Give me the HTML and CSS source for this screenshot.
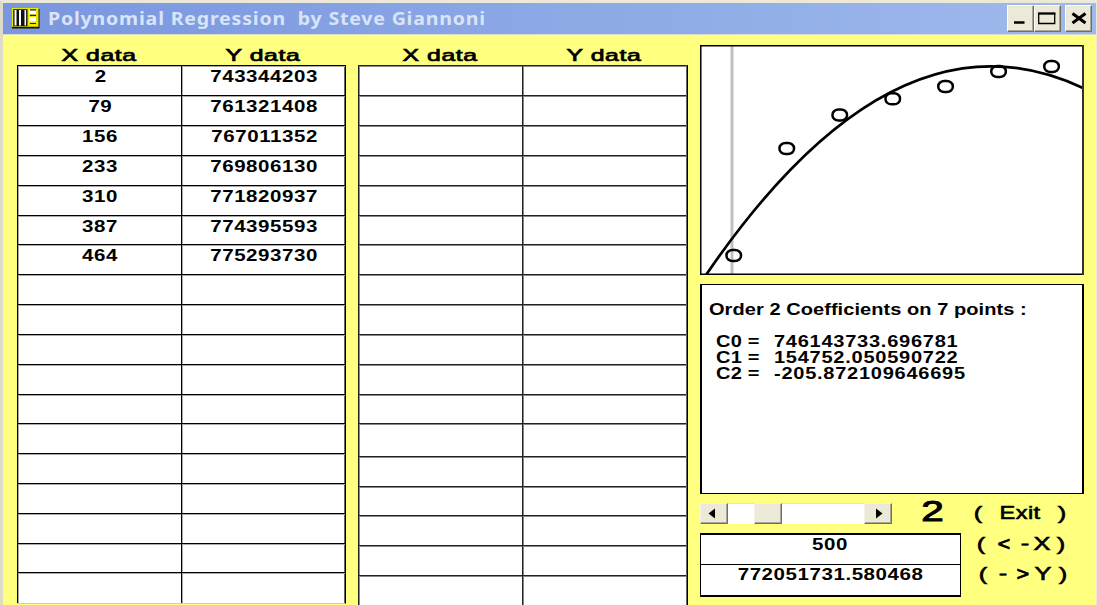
FILE: index.html
```html
<!DOCTYPE html>
<html lang="en">
<head>
<meta charset="utf-8">
<title>Polynomial Regression</title>
<link rel="stylesheet" href="styles.css">
</head>
<body>
<div class="window">
  <header class="titlebar">
    <svg class="app-icon" width="28" height="21" viewBox="0 0 28 21">
      <rect x="0" y="1" width="27.500" height="19.500" fill="#111"/>
      <rect x="0" y="0" width="26.500" height="18.800" fill="#e8e800"/>
      <rect x="1.200" y="1.200" width="14.300" height="17" fill="#111"/>
      <path d="M3.500 2V17.500M8 2V17.500" stroke="#fff" stroke-width="2"/>
      <path d="M13.300 2V17.500" stroke="#fff" stroke-width="1.600"/>
      <path d="M17 4.300h7M17 11.300h7" stroke="#fff" stroke-width="4"/>
      <path d="M18 1.800h6M18 7.300h6M18 15.500h6" stroke="#222" stroke-width="1.200"/>
    </svg>
    <h1 class="title"><span class="title-text">Polynomial Regression&nbsp; by Steve Giannoni</span></h1>
    <div class="controls">
      <button class="ctl" aria-label="Minimize"><svg width="26" height="26"><path d="M6 16.500h10.500" stroke="#000" stroke-width="2.500"/></svg></button>
      <button class="ctl" aria-label="Maximize"><svg width="26" height="26"><path d="M3.700 7v10.500h16V7" fill="none" stroke="#000" stroke-width="1.300"/><path d="M3 7.500h17.400" stroke="#000" stroke-width="2.300"/></svg></button>
      <button class="ctl close" aria-label="Close"><svg width="26" height="26"><path d="M6.500 7.500l13 9.500M19.500 7.500l-13 9.500" stroke="#000" stroke-width="3"/></svg></button>
    </div>
  </header>
  <main class="client">
    <section class="data first">
      <div class="heads"><span><b class="head">X data</b></span><span><b class="head">Y data</b></span></div>
      <div class="grid" id="grid-a"></div>
    </section>
    <section class="data second">
      <div class="heads"><span><b class="head">X data</b></span><span><b class="head">Y data</b></span></div>
      <div class="grid" id="grid-b"></div>
    </section>
    <section class="side">
      <svg class="plot" width="384" height="230" viewBox="0 0 384 230">
        <rect width="384" height="230" fill="#fff"/>
        <path d="M32 1V229" stroke="#c0c0c0" stroke-width="3"/>
        <path d="M6 230Q194.500 -46 383 43" fill="none" stroke="#000" stroke-width="2.700"/>
        <g fill="none" stroke="#000" stroke-width="2.500">
          <rect x="26.500" y="205" width="14.500" height="11" rx="6" ry="5"/>
          <rect x="79.500" y="98" width="14.500" height="11" rx="6" ry="5"/>
          <rect x="132.500" y="64.500" width="14.500" height="11" rx="6" ry="5"/>
          <rect x="185.500" y="48.300" width="14.500" height="11" rx="6" ry="5"/>
          <rect x="238.300" y="36" width="14.500" height="11" rx="6" ry="5"/>
          <rect x="291.300" y="21" width="14.500" height="11" rx="6" ry="5"/>
          <rect x="344.300" y="16" width="14.500" height="11" rx="6" ry="5"/>
        </g>
        <path d="M0 .75H383.500M0 229.300H383.500M.8 0V230" stroke="#000" stroke-width="1.500"/>
        <path d="M383 0V230" stroke="#333" stroke-width="2"/>
      </svg>
      <div class="report">
        <p class="line summary"><span class="order">Order 2 Coefficients on 7 points :</span></p>
        <p class="line coef"><span class="name">C0 =</span><span class="num">746143733.696781</span></p>
        <p class="line coef"><span class="name">C1 =</span><span class="num">154752.050590722</span></p>
        <p class="line coef"><span class="name">C2 =</span><span class="num">-205.872109646695</span></p>
      </div>
      <div class="order-row">
        <div class="scroll">
          <button class="sb" aria-label="Lower order"><svg width="28" height="21"><path d="M8.500 10.500L15 5.500V15.500Z"/></svg></button>
          <span class="track"></span>
          <span class="sb thumb"></span>
          <span class="track long"></span>
          <button class="sb" aria-label="Higher order"><svg width="28" height="21"><path d="M18.500 10.500L12 5.500V15.500Z"/></svg></button>
        </div>
        <span class="degree"><b>2</b></span>
        <div class="action exit"><i>(</i><i class="word">Exit</i><i>)</i></div>
      </div>
      <div class="eval">
        <div class="fields">
          <div class="field"><span class="value">500</span></div>
          <div class="field"><span class="value">772051731.580468</span></div>
        </div>
        <div class="actions">
          <div class="action to-x"><i>(</i><i class="arrow">&lt;</i><i class="dash">-</i><i>X</i><i>)</i></div>
          <div class="action to-y"><i>(</i><i class="dash">-</i><i class="arrow">&gt;</i><i>Y</i><i>)</i></div>
        </div>
      </div>
    </section>
  </main>
</div>
<script src="grid.js"></script>
</body>
</html>
```
FILE: styles.css
```css
* { box-sizing: border-box; }
body { margin: 0; overflow: hidden; font-family: "Liberation Sans", Arial, sans-serif; color: #000; }
.window {
  width: 1097px; height: 605px; overflow: hidden; background: #ffff80;
  border: solid #ece9d8; border-width: 3px 1px 0 3px; border-left-color: #dedbc9;
}
.titlebar {
  height: 32px; display: flex; align-items: flex-start;
  background: linear-gradient(90deg, #7a96df, #9ebaec); border-bottom: 1px solid #dcdccc;
}
.app-icon { margin: 5px 0 0 9px; }
.title { margin: 3px 0 0 8px; width: 900px; font: bold 17px/26px "Noto Sans", sans-serif; color: #d8e4f8; }
.title-text { display: inline-block; white-space: nowrap; transform-origin: left; transform: scaleX(1.15); letter-spacing: .7px; }
.controls { margin-left: auto; display: flex; padding: 2px 4px 0 0; }
.ctl {
  width: 27px; height: 27px; padding: 0; background: #ece9d8;
  border: 1px solid; border-color: #fff #716f64 #716f64 #fff; box-shadow: inset -1px -1px #aca899;
}
.ctl svg, .sb svg { display: block; }
.close { margin-left: 4px; }

.client { display: flex; align-items: flex-start; height: 570px; overflow: hidden; padding-left: 14px; }
.data { flex: none; width: 330px; }
.first { width: 329px; }
.second { margin-left: 12px; }
.heads { height: 30.4px; display: grid; grid-template-columns: 164px 164px; text-align: center; padding-top: 10px; }
.heads span { line-height: 20px; }
.head { display: inline-block; white-space: nowrap; font-size: 16.5px; font-weight: 400; letter-spacing: .4px; transform: scaleX(1.5); -webkit-text-stroke: .7px #000; }
.grid { border-right: 1px solid #000; box-shadow: inset -1px 0 #666; background: #fff; border-bottom: 1px solid #ccc; padding-right: 1px; }
.row { display: grid; grid-template-columns: 164px 164px; height: 29.84px; }
.first .row:last-child { height: 31px; }
.row.tall { height: 32.4px; }
.cell { border-top: 1px solid #000; border-left: 1px solid #000; box-shadow: inset 1px 1px #aaa; text-align: center; line-height: 21px; padding-left: 2px; }
.second .cell { border-color: #222; box-shadow: inset 1px 1px #888; }
.value { display: inline-block; font-weight: 700; font-size: 16px; letter-spacing: .45px; transform: scaleX(1.28); white-space: nowrap; }

.side { flex: none; width: 390px; margin: 10px 0 0 12px; }
.plot { display: block; }
.report { width: 384px; height: 210px; margin-top: 9px; padding: 17px 0 0 7px; background: #fff; border: 1px solid #000; border-width: 1px 2px 1px 2px; }
.line { margin: 0; display: flex; height: 16px; line-height: 16px; font-size: 16px; font-weight: 700; white-space: nowrap; }
.summary { margin-bottom: 16px; }
.line span { display: block; transform-origin: left; transform: scaleX(1.25); }
.line .order { letter-spacing: .05px; }
.line .num { letter-spacing: .6px; }
.coef { padding-left: 7px; }
.name { width: 58px; letter-spacing: .2px; }

.order-row { display: flex; height: 30px; margin-top: 9px; }
.scroll { display: flex; width: 192px; height: 21px; background: #fff; box-shadow: inset 0 1px #e4e1d0; }
.sb { flex: none; width: 28px; height: 21px; padding: 0; border: 1px solid; border-color: #f4f2e8 #716f64 #716f64 #f4f2e8; background: #ece9d8; box-shadow: inset -1px -1px #aca899; }
.sb svg { margin: -1px; }
.track { width: 26px; }
.long { width: 82px; }
.degree { width: 80px; padding-left: 32px; }
.degree b { display: block; width: 16px; font-size: 30px; line-height: 16px; font-weight: 400; transform: scaleX(1.35); -webkit-text-stroke: 1px #000; }
.action { display: flex; height: 20px; font-size: 17.5px; line-height: 21px; }
.action i { font-style: normal; width: 20px; text-align: center; transform: scaleX(1.45); -webkit-text-stroke: .6px #000; }
.action .word { width: 60px; letter-spacing: .3px; }
.action .arrow { -webkit-text-stroke-width: 1px; transform: translateX(3px) scaleX(1.2); }
.to-y .arrow { transform: scaleX(1.2); }
.exit { margin-left: -4px; }
.exit .word { transform: scaleX(1.35); width: 64px; }
.eval { display: flex; }
.fields { width: 261px; height: 64px; background: #fff; border: 2px solid #000; border-width: 2px 1px; }
.field { height: 29px; line-height: 19px; text-align: center; }
.field + .field { border-top: 1px solid #000; line-height: 20px; }
.actions { padding: 1px 0 0 10px; }
.to-x .dash { width: 22px; transform: translateX(3px) scaleX(1.45); }
.to-x i:nth-child(4) { width: 18px; }
.to-y { margin: 10px 0 0 2px; }
```
FILE: grid.js
```js
const points = [
  [2, 743344203], [79, 761321408], [156, 767011352], [233, 769806130],
  [310, 771820937], [387, 774395593], [464, 775293730]
];
function fill(id, data, tallRow) {
  const grid = document.getElementById(id);
  for (let r = 0; r < 18; r++) {
    const row = document.createElement('div');
    row.className = r === tallRow ? 'row tall' : 'row';
    for (let c = 0; c < 2; c++) {
      const cell = document.createElement('div');
      cell.className = 'cell';
      if (data[r]) {
        const value = document.createElement('span');
        value.className = 'value';
        value.textContent = data[r][c];
        cell.append(value);
      }
      row.append(cell);
    }
    grid.append(row);
  }
}
fill('grid-a', points, -1);
fill('grid-b', [], 12);
```
